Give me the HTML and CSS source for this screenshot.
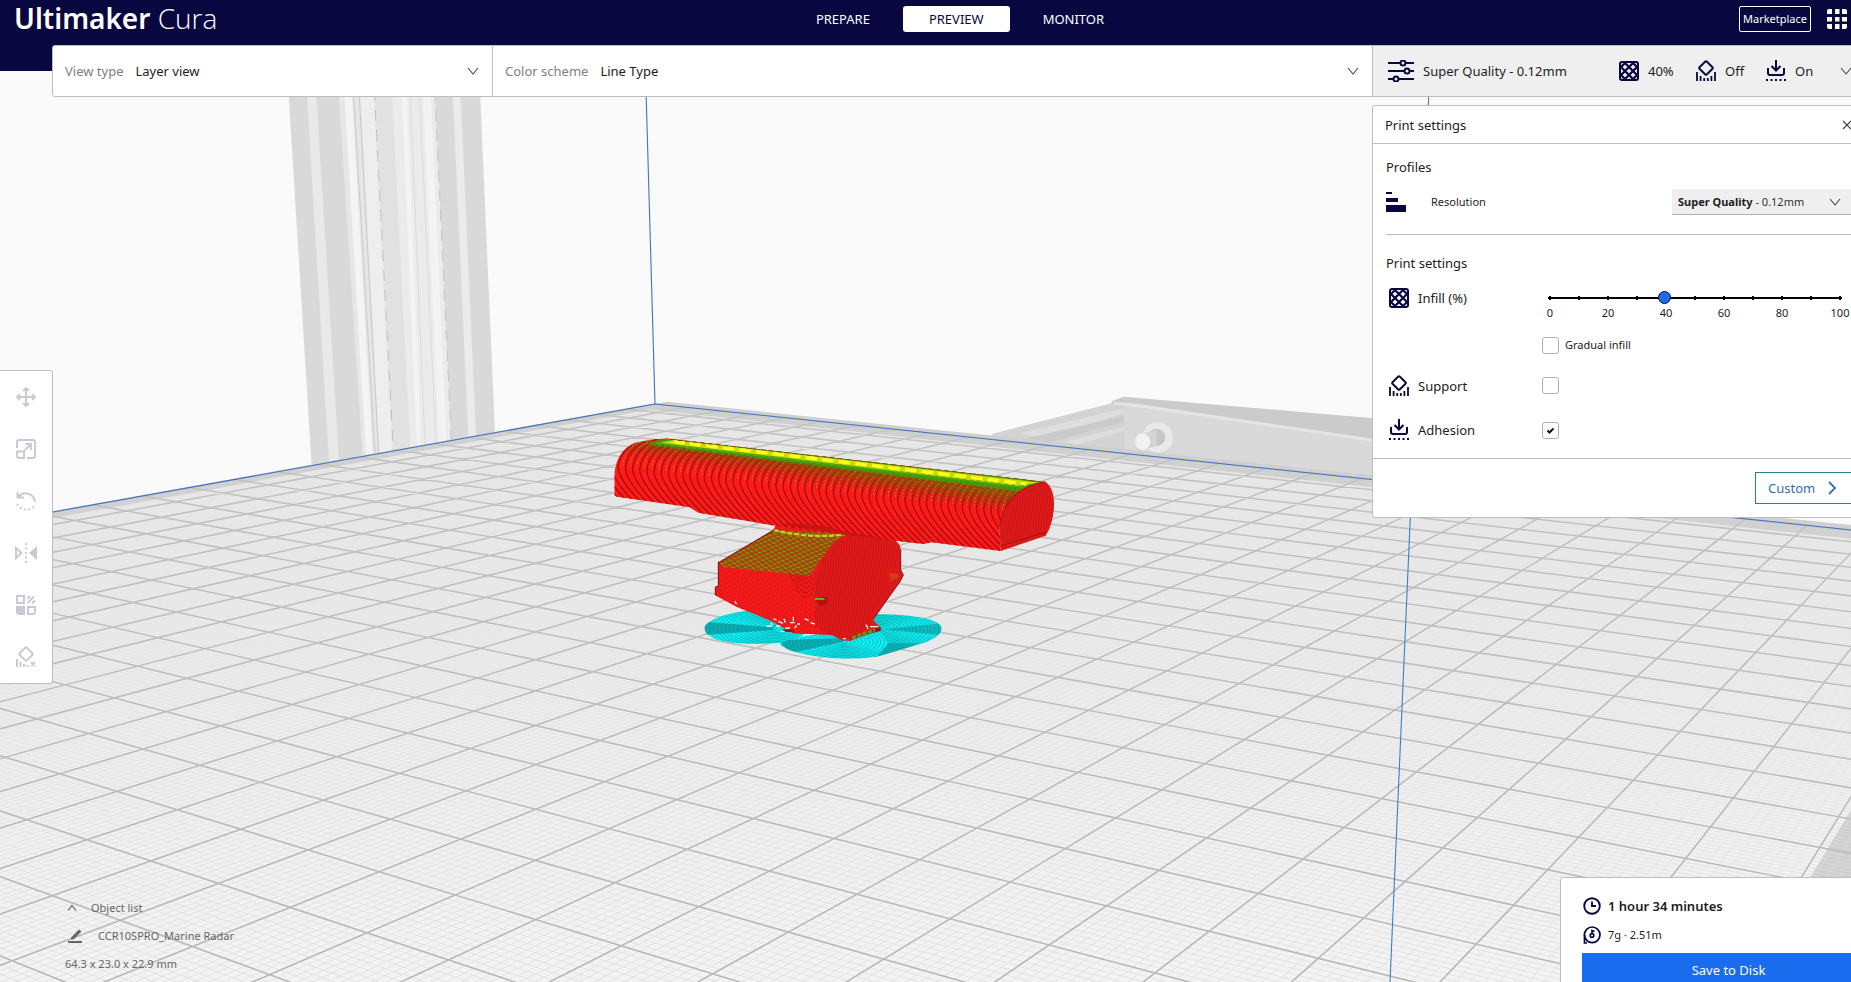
FILE: index.html
```html
<!DOCTYPE html>
<html lang="en">
<head>
<meta charset="utf-8">
<title>Ultimaker Cura</title>
<link rel="stylesheet" href="styles.css">
</head>
<body>
<svg class="defs" width="0" height="0" aria-hidden="true">
  <symbol id="i-down" viewBox="0 0 12 12"><path d="M1 3l5 6 5-6" fill="none" stroke="currentColor" stroke-width="1.1"/></symbol>
  <symbol id="i-infill" viewBox="0 0 20 20"><rect x="1" y="1" width="18" height="18" rx="2" fill="none" stroke="currentColor" stroke-width="2"/><path d="M1 7l6-6M1 15L15 1M5 19L19 5M13 19l6-6M13 1l6 6M5 1l14 14M1 5l14 14M1 13l6 6" stroke="currentColor" stroke-width="2.3"/></symbol>
  <symbol id="i-support" viewBox="0 0 20 22"><rect x="4.900" y="2.900" width="10.200" height="10.200" rx="1" transform="rotate(45 10 8)" fill="none" stroke="currentColor" stroke-width="1.9"/><path d="M1 12v9M4.600 16v5M8.200 18v3M11.800 18v3M15.400 16v5M19 12v9" stroke="currentColor" stroke-width="1.8"/></symbol>
  <symbol id="i-adhesion" viewBox="0 0 20 22"><path d="M10 0v10M5.500 6l4.500 4.500L14.500 6M2 8v5q0 2 2 2h12q2 0 2-2V8" fill="none" stroke="currentColor" stroke-width="2"/><path d="M0 20h20" stroke="currentColor" stroke-width="2" stroke-dasharray="2 2.500"/></symbol>
</svg>

<div class="frame">
  <svg class="scene" viewBox="0 0 1851 982" preserveAspectRatio="xMinYMin slice" role="img" aria-label="Sliced model on the build plate">
    <defs>
      <linearGradient id="plate" x1="0" y1="404" x2="0" y2="982" gradientUnits="userSpaceOnUse"><stop offset="0" stop-color="#e6e6e6"/><stop offset=".4" stop-color="#ebebeb"/><stop offset="1" stop-color="#f3f3f3"/></linearGradient>
      <linearGradient id="minorFade" x1="0" y1="404" x2="0" y2="982" gradientUnits="userSpaceOnUse"><stop offset="0" stop-color="#dedede" stop-opacity="0"/><stop offset=".3" stop-color="#dedede" stop-opacity=".2"/><stop offset="1" stop-color="#dedede" stop-opacity=".75"/></linearGradient>
      <linearGradient id="majorFade" x1="0" y1="404" x2="0" y2="982" gradientUnits="userSpaceOnUse"><stop offset="0" stop-color="#c4c4c4"/><stop offset="1" stop-color="#b8b8b8"/></linearGradient>
      <linearGradient id="beamTop" x1="800" y1="225" x2="785" y2="325" gradientUnits="userSpaceOnUse"><stop offset="0" stop-color="#6f8f00"/><stop offset=".45" stop-color="#8a4a08" stop-opacity=".8"/><stop offset="1" stop-color="#c01010" stop-opacity="0"/></linearGradient>
      <pattern id="weave" width="24" height="14" patternUnits="userSpaceOnUse" patternTransform="rotate(8)"><rect width="24" height="14" fill="#a1430c"/><path d="M0 3h11M12 10h11" stroke="#74a808" stroke-width="4"/><path d="M12 3h10M0 10h10" stroke="#d82a14" stroke-width="3"/><path d="M0 6h24M0 13h24" stroke="#7d5a08" stroke-width="1"/></pattern>
      <pattern id="hatch" width="9" height="9" patternUnits="userSpaceOnUse" patternTransform="rotate(-38)"><rect width="9" height="9" fill="#fb1a1a"/><path d="M0 0v9" stroke="#b01212" stroke-width="3"/></pattern>
      <pattern id="upright" width="8" height="8" patternUnits="userSpaceOnUse" patternTransform="rotate(8)"><rect width="8" height="8" fill="#df1a1a"/><path d="M0 0v8" stroke="#bd1212" stroke-width="3"/></pattern>
      <clipPath id="beamClip"><path d="M163 345V290Q165 215 225 188L270 180Q320 172 340 178L1450 305L1365 345Q1325 390 1318 440L1322 513L1115 487L1090 492L860 465L650 438L415 398L390 382L170 350Z"/></clipPath>
      <clipPath id="bodyClip"><path d="M475 548L750 587L790 620L770 700L830 765L700 760L640 725L530 680L465 645L467 620L475 618Z"/></clipPath>
      <clipPath id="brimLeft"><path d="M433 745Q440 710 560 692L760 720L730 765Q690 790 640 790Q440 800 433 745Z"/></clipPath>
      <clipPath id="brimFront"><path d="M658 792Q700 765 830 758L880 740L960 750L985 790L950 830Q860 842 780 830Q690 820 658 792Z"/></clipPath>
      <clipPath id="brimRight"><path d="M940 702Q1140 705 1145 745Q1145 775 1070 795L950 830L860 800L930 720Z"/></clipPath>
    </defs>

    <rect width="1851" height="982" fill="#fafafa"/>

    <g transform="translate(260 90) scale(.33333)">
      <path d="M85 0H660L705 1027L155 1128Z" fill="#d9d9d9"/>
      <path d="M140 0H168L237 1113L207 1118Z" fill="#e9e9e9"/>
      <path d="M235 0H345L402 1083L308 1100Z" fill="#e6e6e6"/>
      <path d="M252 0H275L338 1095L318 1099Z" fill="#f4f4f4"/>
      <path d="M302 0H340L396 1084L358 1090Z" fill="#eeeeee"/>
      <path d="M280 0L345 1093M297 0L356 1090" stroke="#c9c9c9" stroke-width="3"/>
      <path d="M343 0L400 1082" stroke="#bdbdbd" stroke-width="3" stroke-dasharray="34 26"/>
      <path d="M345 0H395L450 1073L402 1082Z" fill="#e1e1e1"/>
      <path d="M395 0H524L574 1050L450 1073Z" fill="#ebebeb"/>
      <path d="M425 0H440L483 1067L470 1070ZM488 0H512L560 1053L538 1057Z" fill="#f3f3f3"/>
      <path d="M450 0L495 1065M478 0L528 1060" stroke="#dadada" stroke-width="3"/>
      <path d="M524 0L574 1050" stroke="#c4c4c4" stroke-width="3" stroke-dasharray="34 26"/>
      <path d="M578 0H601L648 1037L625 1041Z" fill="#ebebeb"/>
    </g>

    <g transform="translate(960 380) scale(.33333)">
      <path d="M95 162L455 70L500 75V220L100 170Z" fill="#d3d3d3"/>
      <path d="M180 160L493 85V100L250 175ZM310 185L493 140V152L350 195Z" fill="#dedede"/>
      <path d="M200 175L493 108V125L270 187Z" fill="#cacaca"/>
      <path d="M493 75L1300 190V310L493 220Z" fill="#d9d9d9"/>
      <path d="M455 74V64L490 50L1300 120V190L500 75Z" fill="#cbcbcb"/>
      <path d="M460 70L530 76L1300 190" fill="none" stroke="#e4e4e4" stroke-width="9"/>
      <circle cx="593" cy="173" r="46" fill="#e9e9e9"/>
      <circle cx="590" cy="172" r="26" fill="#c6c6c6"/>
      <path d="M548 160L590 150V198L548 210Z" fill="#d3d3d3"/>
      <ellipse cx="548" cy="185" rx="23" ry="25" fill="#f2f2f2"/>
    </g>

    <g id="bed"></g>

    <path d="M53 512L655 404L1851 530M646 90L655 404" fill="none" stroke="#3f73c0" stroke-width="1.100"/>

    <g transform="translate(560 380) scale(.33333)">
      <g clip-path="url(#brimLeft)"><rect x="420" y="680" width="360" height="130" fill="#10f0f4"/><path d="M433 725L640 742V750L433 765Z" fill="#087f83" opacity=".6"/><g id="ringsLeft"></g></g>
      <g clip-path="url(#brimRight)"><rect x="840" y="690" width="320" height="150" fill="#10eaee"/><path d="M960 748L1150 730V765ZM900 790L1080 790L960 835Z" fill="#087f83" opacity=".45"/><g id="ringsRight"></g></g>
      <g clip-path="url(#brimFront)"><path d="M640 730H1000V840H640Z" fill="#10f0f4"/><path d="M655 780L850 775V785L690 820Z" fill="#087f83" opacity=".6"/><g id="ringsFront"></g></g>

      <path d="M475 548L640 450L650 430L1000 478Q1022 490 1022 510V570L1030 585L1020 605L940 720L965 748L870 783L845 780L830 765L700 760L640 725L530 680L465 645L467 620L475 618Z" fill="#e51a1a"/>
      <path d="M475 548L750 587L800 600L770 720L830 765L700 760L640 725L530 680L465 645L467 620L475 618Z" fill="url(#hatch)"/>
      <g id="bodyArcs" clip-path="url(#bodyClip)"></g>
      <path d="M480 548L640 450L870 462Q800 500 750 587L490 562Z" fill="url(#weave)"/>
      <path d="M640 450Q760 478 860 462" fill="none" stroke="#b5dc10" stroke-width="7" stroke-dasharray="16 5"/>
      <path d="M870 460Q810 480 785 545Q765 580 765 640V740L850 782L930 740L940 700L1020 605L1030 585L1022 570V510Q1018 480 960 474Z" fill="url(#upright)"/>
      <path d="M1022 510V570L1030 585L1020 605L940 715" fill="none" stroke="#8f1212" stroke-width="3"/>
      <path d="M475 545V618L466 622V645M475 548L645 448" fill="none" stroke="#6d1616" stroke-width="3"/>
      <path d="M765 655L802 650V672L780 680Z" fill="#b31212"/><path d="M765 657h28" stroke="#65b010" stroke-width="6"/>
      <path d="M985 580h25l8 12-25 12z" fill="#d83a12"/>
      <path d="M868 778L872 770L962 742V752Z" fill="#8a1a10"/><path d="M875 774L945 750" stroke="#6c8c20" stroke-width="10" stroke-dasharray="14 3"/>
      <path id="specks" fill="none" stroke="#f4eeee" stroke-width="4"/>
      <path d="M665 748h28l10 8h-24z" fill="#7e2418"/>

      <g clip-path="url(#beamClip)">
        <rect x="150" y="160" width="1350" height="370" fill="#ff1a1a"/>
        <g id="beamRings"></g>
        <path d="M190 195L340 175L1450 300L1340 410L330 275Q240 230 180 250Z" fill="url(#beamTop)"/>
        <g id="beamGold"></g>
        <path d="M262 190L320 176L1450 304L1370 332L330 199Z" fill="#4c9a08"/>
        <path d="M300 188L340 180L1440 308L1370 318Z" fill="#c3dc0a"/>
        <path d="M340 185L1400 312" stroke="#ffff18" stroke-width="10" stroke-dasharray="34 16"/>
        <path d="M290 190L1390 320" stroke="#58b010" stroke-width="5" stroke-dasharray="12 9"/>
        <path d="M280 195L1380 329" stroke="#2c9a12" stroke-width="6" stroke-dasharray="9 7"/>
        <path d="M280 203L1370 337" stroke="#b02a10" stroke-width="4" stroke-dasharray="10 8"/>
        <path d="M330 177L1450 304" stroke="#8b3a08" stroke-width="5" stroke-dasharray="14 9"/>
      </g>
      <path d="M650 432Q760 425 860 455L1000 480L870 466Z" fill="#c81414"/>
      <path d="M1450 305Q1400 315 1365 345Q1325 390 1318 440L1322 513L1455 468Q1480 430 1482 370Q1478 320 1450 305Z" fill="url(#upright)"/>
      <path d="M1450 305Q1478 320 1479 370Q1478 430 1453 468" fill="none" stroke="#e01a1a" stroke-width="6"/>
      <path d="M1318 440Q1325 390 1365 345Q1400 315 1450 307M1322 498L1458 456" fill="none" stroke="#a01010" stroke-width="3"/>
    </g>

    <path d="M1429 90L1390 982" fill="none" stroke="#3f7fc0" stroke-width="1.100"/>
  </svg>

  <header class="header">
    <h1 class="logo"><b>Ultimaker</b> <span>Cura</span></h1>
    <nav class="tabs">
      <button class="tab" type="button">PREPARE</button>
      <button class="tab tab-active" type="button" aria-current="page">PREVIEW</button>
      <button class="tab" type="button">MONITOR</button>
    </nav>
    <div class="account">
      <button class="market" type="button">Marketplace</button>
      <button class="plain" type="button" aria-label="Applications">
        <svg width="20" height="20" viewBox="0 0 20 20" fill="#fff"><path d="M2 0h3v5H0V2q0-2 2-2zM8 0h4.500v5H8zM15 0h3q2 0 2 2v3h-5zM0 8h5v4.500H0zM8 8h4.500v4.500H8zM15 8h5v4.500h-5zM0 15h5v5H2q-2 0-2-2zM8 15h4.500v5H8zM15 15h5v3q0 2-2 2h-3z"/></svg>
      </button>
    </div>
  </header>

  <div class="stagebar">
    <div class="field field-view">
      <label for="view">View type</label>
      <select id="view"><option>Layer view</option></select>
      <svg class="chev" width="12" height="12"><use href="#i-down"/></svg>
    </div>
    <div class="field field-scheme">
      <label for="scheme">Color scheme</label>
      <select id="scheme"><option>Line Type</option></select>
      <svg class="chev" width="12" height="12"><use href="#i-down"/></svg>
    </div>
    <button class="summary" type="button" aria-expanded="true">
      <svg width="26" height="22" viewBox="0 0 26 22" fill="none" stroke="currentColor" stroke-width="2"><path d="M0 3h12M18 3h8M0 11h16M22 11h4M0 19h5M11 19h15"/><circle cx="15" cy="3" r="2.500"/><circle cx="19" cy="11" r="2.500"/><circle cx="8" cy="19" r="2.500"/></svg>
      <span class="summary-name">Super Quality - 0.12mm</span>
      <span class="stat stat-infill"><svg width="20" height="20"><use href="#i-infill"/></svg>40%</span>
      <span class="stat stat-support"><svg width="20" height="22"><use href="#i-support"/></svg>Off</span>
      <span class="stat stat-adhesion"><svg width="20" height="22"><use href="#i-adhesion"/></svg>On</span>
      <svg class="chev" width="12" height="12"><use href="#i-down"/></svg>
    </button>
  </div>

  <section class="panel" aria-label="Print settings">
    <div class="panel-head">
      <h2>Print settings</h2>
      <button class="plain" type="button" aria-label="Close"><svg width="10" height="10" viewBox="0 0 10 10"><path d="M1 1l8 8M9 1L1 9" stroke="#444" stroke-width="1.200"/></svg></button>
    </div>
    <div class="panel-body">
      <h3>Profiles</h3>
      <div class="resolution">
        <svg width="20" height="20" viewBox="0 0 20 20" fill="#08073f"><path d="M0 0h6v2H0zM0 6h12v4H0zM0 13h20v7H0z"/></svg>
        <label for="profile">Resolution</label>
        <span class="combo">
          <select id="profile"><option>Super Quality - 0.12mm</option></select>
          <span class="combo-text" aria-hidden="true"><b>Super Quality</b> - 0.12mm</span>
          <svg class="chev" width="12" height="12"><use href="#i-down"/></svg>
        </span>
      </div>
      <h3 class="second">Print settings</h3>
      <div class="row row-infill">
        <svg width="20" height="20"><use href="#i-infill"/></svg>
        <label for="infill">Infill (%)</label>
        <div class="slider">
          <input id="infill" type="range" min="0" max="100" step="1" value="39">
          <div class="scale"><span>0</span><span>20</span><span>40</span><span>60</span><span>80</span><span>100</span></div>
        </div>
      </div>
      <label class="gradual"><input type="checkbox">Gradual infill</label>
      <div class="row row-support">
        <svg width="20" height="22"><use href="#i-support"/></svg>
        <label for="support">Support</label>
        <input id="support" type="checkbox">
      </div>
      <div class="row row-adhesion">
        <svg width="20" height="22"><use href="#i-adhesion"/></svg>
        <label for="adhesion">Adhesion</label>
        <input id="adhesion" type="checkbox" checked>
      </div>
    </div>
    <div class="panel-foot">
      <button class="custom" type="button">Custom<svg width="9" height="14" viewBox="0 0 9 14"><path d="M1 1l6 6-6 6" fill="none" stroke="currentColor" stroke-width="1.800"/></svg></button>
    </div>
  </section>

  <div class="tools" role="toolbar" aria-label="Tools">
    <button type="button" aria-label="Move"><svg width="20" height="20" viewBox="0 0 20 20"><path d="M10 1v18M1 10h18M7 4l3-3 3 3M7 16l3 3 3-3M4 7l-3 3 3 3M16 7l3 3-3 3"/></svg></button>
    <button type="button" aria-label="Scale"><svg width="20" height="20" viewBox="0 0 20 20"><path d="M1 9V3q0-2 2-2h14q2 0 2 2v14q0 2-2 2h-6M1 12.500h7V19H3q-2 0-2-2zM8.500 11.500L15 5M9.500 5H15v6"/></svg></button>
    <button type="button" aria-label="Rotate"><svg width="20" height="20" viewBox="0 0 20 20"><path d="M2 6q4-4.500 9-3.500 7 1 8 8.500M1.500 1v5.500H8"/><path d="M18 15.500q-7 6-14 1Q1 14 1 10.500" stroke-dasharray="2 2.500"/></svg></button>
    <button type="button" aria-label="Mirror"><svg width="22" height="20" viewBox="0 0 22 20"><path d="M1 5l5.500 5L1 15z"/><path class="solid" d="M22 3v14l-8-7z"/><path d="M11 0v20" stroke-dasharray="2 2.500"/></svg></button>
    <button type="button" aria-label="Per model settings"><svg width="20" height="20" viewBox="0 0 20 20"><path d="M1 1h7v7H1zM12 12h7v5q0 2-2 2h-5zM11.500 8L18 1.500M11.500 3.500L14 1M16 8.500L19 5.500"/><path class="solid" d="M0 11h9v9H3q-3 0-3-3z"/></svg></button>
    <button type="button" aria-label="Support blocker"><svg width="20" height="22" viewBox="0 0 20 22"><rect x="5" y="3" width="10" height="10" rx="1" transform="rotate(45 10 8)"/><path d="M1 13v8M4.500 16v5M8 18v3M11.500 19v2M15 16l4 4M19 16l-4 4"/></svg></button>
  </div>

  <div class="objects">
    <button class="object-toggle" type="button"><svg width="10" height="8" viewBox="0 0 10 8"><path d="M1 6.500L5 1.500l4 5" fill="none" stroke="currentColor" stroke-width="1.200"/></svg>Object list</button>
    <button class="object-name" type="button"><svg width="14" height="14" viewBox="0 0 14 14"><path d="M0 12h14v2H0zM3 10.500V8.500L11 .500 13.500 2.500 5.500 10.500z" fill="currentColor"/></svg>CCR10SPRO_Marine Radar</button>
    <p>64.3 x 23.0 x 22.9 mm</p>
  </div>

  <section class="job" aria-label="Print job">
    <p class="job-time"><svg width="18" height="18" viewBox="0 0 18 18" fill="none" stroke="#08073f" stroke-width="1.900"><circle cx="9" cy="9" r="7.800"/><path d="M9 4.500V9h4"/></svg>1 hour 34 minutes</p>
    <p class="job-material"><svg width="18" height="18" viewBox="0 0 18 18" fill="none" stroke="#08073f" stroke-width="1.700"><circle cx="9.200" cy="8.800" r="7.800"/><circle cx="9" cy="9.500" r="1.800"/><path d="M9 7.500V4.500l2.500 1M1.500 9v8H4"/></svg>7g · 2.51m</p>
    <button class="save" type="button">Save to Disk</button>
  </section>
</div>
<script src="scene.js"></script>
</body>
</html>
```
FILE: styles.css
```css
* { box-sizing: border-box; }
html, body { height: 100%; margin: 0; overflow: hidden; }
body { background: #fafafa; color: #1c1c24; font: 13px/20px "Noto Sans", "Open Sans", sans-serif; }
h1, h2, h3, p { margin: 0; font-size: inherit; font-weight: 400; }
button, select, input { font: inherit; color: inherit; margin: 0; }
button { background: none; border: 0; padding: 0; }
svg { display: block; flex: none; }
.defs { position: absolute; }

/* The application window is wider than the visible viewport */
.frame { position: relative; width: calc(100% + 69px); height: 100%; overflow: hidden; }
.scene { position: absolute; top: 0; left: 0; width: calc(100% - 69px); height: 100%; }

.header { position: relative; display: grid; grid-template-columns: 1fr auto 1fr; align-items: start; height: 71px; padding: 0 73px 0 14px; background: #08073f; color: #fff; }
.logo { font-size: 28px; line-height: 36px; }
.logo b { font-weight: 600; }
.logo span { font-family: "Open Sans", "Noto Sans", sans-serif; font-weight: 300; }
.tabs { display: flex; gap: 7px; padding-top: 6px; margin-left: 59px; }
.tab { height: 26px; padding: 0 26px; border-radius: 3px; }
.tab-active { background: #fff; color: #08073f; }
.account { display: flex; justify-content: flex-end; align-items: center; gap: 16px; padding-top: 6px; }
.market { height: 26px; width: 72px; border: 1px solid #fff; border-radius: 2px; font-size: 11px; }

.stagebar { position: relative; display: flex; height: 52px; margin: -26px 54px 0 52px; background: #fff; border: 1px solid #bdbdbd; border-radius: 3px; }
.field { display: flex; align-items: center; position: relative; padding: 0 13px 0 12px; }
.field-view { flex: 0 0 439px; }
.field-scheme { flex: 1; border-left: 1px solid #bdbdbd; }
.field label { color: #808080; margin-right: 12px; }
.field select { flex: 1; appearance: none; border: 0; background: none; padding: 0; height: 50px; }
.chev { color: #444; pointer-events: none; }
.summary { display: flex; align-items: center; flex: 0 0 493px; padding: 0 13px 0 15px; background: #efefef; border-left: 1px solid #bdbdbd; text-align: left; }
.summary svg { color: #08073f; }
.summary .chev { color: #444; margin-left: auto; }
.summary-name { flex: 0 0 196px; margin-left: 9px; }
.stat { display: flex; align-items: center; gap: 9px; }
.stat-infill { width: 77px; }
.stat-support { width: 70px; }

.panel { position: relative; width: 494px; margin: 8px 54px 0 auto; background: #fff; border: 1px solid #bdbdbd; border-radius: 3px; }
.panel-head { display: flex; align-items: center; justify-content: space-between; height: 38px; padding: 0 13px 0 12px; border-bottom: 1px solid #bdbdbd; }
.panel-body { padding: 13px 13px 0; }
.resolution { display: flex; align-items: center; height: 50px; font-size: 11px; }
.resolution label { flex: 1; margin-left: 25px; }
.combo { position: relative; display: flex; align-items: center; width: 180px; height: 26px; padding: 0 11px 0 6px; background: #efefef; border-bottom: 1px solid #b0b0b0; }
.combo select { position: absolute; inset: 0; width: 100%; appearance: none; border: 0; background: none; color: transparent; }
.combo-text { position: relative; flex: 1; color: #333; pointer-events: none; }
.combo-text b { color: #222; }
.combo .chev { position: relative; }
.second { margin-top: 7px; padding-top: 18px; border-top: 1px solid #bdbdbd; }
.row { display: flex; align-items: center; padding-left: 3px; }
.row > svg { color: #08073f; }
.row label { flex: 0 0 130px; margin-left: 9px; }
.row-infill { align-items: flex-start; margin-top: 15px; }
.slider { flex: 0 0 294px; }
.slider input { display: block; appearance: none; width: 294px; height: 20px; background: none; }
.slider input::-webkit-slider-runnable-track { height: 4px; background: radial-gradient(circle at 2px 2px, #000 2px, transparent 2px) 0 0 / 29px 4px repeat-x, linear-gradient(#000, #000) 0 1px / 100% 2px no-repeat; }
.slider input::-webkit-slider-thumb { appearance: none; width: 13px; height: 13px; margin-top: -5px; border: 1px solid #08073f; border-radius: 50%; background: #1a6ce8; }
.scale { display: flex; justify-content: space-between; margin: -3px -10px 0; font-size: 11px; line-height: 16px; }
.scale span { width: 24px; text-align: center; }
input[type="checkbox"] { flex: none; appearance: none; width: 17px; height: 17px; border: 1px solid #b0b0b0; border-radius: 3px; background: #fff; }
input[type="checkbox"]:checked { background: #fff url("data:image/svg+xml,%3Csvg xmlns='http://www.w3.org/2000/svg' viewBox='0 0 15 15'%3E%3Cpath d='M4.500 7.500l2 2 4-4' fill='none' stroke='%23111' stroke-width='2'/%3E%3C/svg%3E"); }
.gradual { display: flex; align-items: center; gap: 6px; width: max-content; margin: 14px 0 0 156px; font-size: 11px; }
.row-support { margin-top: 8px; height: 45px; }
.row-adhesion { height: 44px; }
.row-support label, .row-adhesion label { flex-basis: 124px; }
.panel-foot { display: flex; justify-content: flex-end; margin-top: 6px; padding: 13px; border-top: 1px solid #bdbdbd; }
.custom { display: flex; align-items: center; gap: 13px; height: 32px; width: 97px; padding-left: 12px; border: 1px solid #2a7d96; color: #2f6fb8; }

.tools { position: absolute; left: 0; top: 370px; width: 53px; background: #fff; border: 1px solid #bdbdbd; border-left: 0; border-radius: 0 3px 3px 0; }
.tools button { display: flex; align-items: center; justify-content: center; width: 52px; height: 52px; }
.tools svg { fill: none; stroke: #c9c9d6; stroke-width: 1.900; }
.tools .solid { fill: #c9c9d6; stroke: none; }

.objects { position: absolute; left: 65px; bottom: 7px; display: flex; flex-direction: column; align-items: flex-start; gap: 6px; color: #666; font-size: 11px; line-height: 22px; }
.objects button { display: flex; align-items: center; }
.object-toggle { gap: 14px; padding-left: 2px; }
.object-name { gap: 16px; padding-left: 3px; }

.job { position: absolute; left: calc(100% - 360px); bottom: -37px; width: 338px; padding: 18px 22px 31px 21px; background: #fff; border: 1px solid #bdbdbd; border-radius: 3px; }
.job p { display: flex; align-items: center; gap: 7px; padding-left: 1px; }
.job .job-time { font-weight: 600; }
.job .job-material { margin-top: 9px; font-size: 11px; }
.save { display: block; width: 100%; height: 34px; margin-top: 8px; background: #1a6cee; color: #fff; }
```
FILE: scene.js
```js
(function () {
  var NS = "http://www.w3.org/2000/svg";
  function add(parent, d, attrs) {
    var p = document.createElementNS(NS, "path");
    p.setAttribute("d", d);
    for (var k in attrs) p.setAttribute(k, attrs[k]);
    document.getElementById(parent).appendChild(p);
  }

  // Perspective projection of bed coordinates, in 10 mm cells from the back corner
  var A = -0.00003916, B = -0.00005932;
  function pt(i, j) {
    var w = 1 / 290 + A * i + B * j;
    var x = (655 / 290 + A * -2095 * i + B * 2272 * j) / w;
    return x.toFixed(1) + " " + (114 + 1 / w).toFixed(1);
  }
  function quad(i0, j0, i1, j1) {
    return "M" + pt(i0, j0) + "L" + pt(i1, j0) + "L" + pt(i1, j1) + "L" + pt(i0, j1) + "Z";
  }
  add("bed", quad(0, -0.45, 31, 31), { fill: "#cfcfcf" });
  add("bed", quad(0.5, 0.75, 29.07, 30), { fill: "url(#plate)" });
  var minor = "", major = "";
  for (var n = 0; n <= 300; n++) {
    var t = n / 10;
    var d = "M" + pt(t, 0) + "L" + pt(t, 30) + "M" + pt(0, t) + "L" + pt(30, t);
    if (n % 10) minor += d; else major += d;
  }
  add("bed", minor, { stroke: "url(#minorFade)", "stroke-width": 1, fill: "none" });
  add("bed", major, { stroke: "url(#majorFade)", "stroke-width": 1.6, fill: "none" });

  // Outer wall layers along the radar bar
  var rings = "", gold = "";
  for (var k = -8; k < 62; k++) {
    var x = 250 + k * 21.5, y = 168 + (x - 250) * 0.115;
    rings += "M" + (x + 60) + " " + y + "q-85 35 -92 95q-4 45 110 150";
    gold += "M" + (x + 34) + " " + (y + 22) + "q-50 24 -52 72";
  }
  add("beamRings", rings, { stroke: "#a01010", "stroke-width": 4, fill: "none" });
  add("beamGold", gold, { stroke: "#c9a818", "stroke-width": 2, "stroke-dasharray": "7 4", fill: "none" });

  // Nested wall arcs where the two faces of the base meet
  var arcs = "";
  for (var a = 0; a < 5; a++) arcs += "M" + (690 + a * 9) + " 580Q735 " + (720 - a * 28) + " " + (780 - a * 9) + " 590";
  add("bodyArcs", arcs, { stroke: "#b01212", "stroke-width": 2, fill: "none" });

  function ellipses(id, cx, cy, count, sx, sy) {
    var d = "";
    for (var r = 1; r <= count; r++) {
      var rx = r * sx, ry = r * sy;
      d += "M" + (cx - rx) + " " + cy + "a" + rx + " " + ry + " 0 1 0 " + 2 * rx + " 0a" + rx + " " + ry + " 0 1 0 " + -2 * rx + " 0";
    }
    add(id, d, { stroke: "#07898d", "stroke-width": 1.6, fill: "none" });
  }
  ellipses("ringsLeft", 640, 745, 18, 12, 4.5);
  ellipses("ringsRight", 960, 747, 18, 11, 4.5);
  ellipses("ringsFront", 852, 786, 18, 11, 4.5);

  document.getElementById("specks").setAttribute("d",
    "M524 664l6 8M620 738h16M640 716l10 4M655 724l14 6M648 738h12M672 716l4 12M690 728h14M700 710v14M676 744h14M704 744l6-8M734 716l12 6M752 728l12 4M662 754h10M918 734l6 12M930 740h24M848 776h10M712 732h8M632 728l6 6");
})();
```
